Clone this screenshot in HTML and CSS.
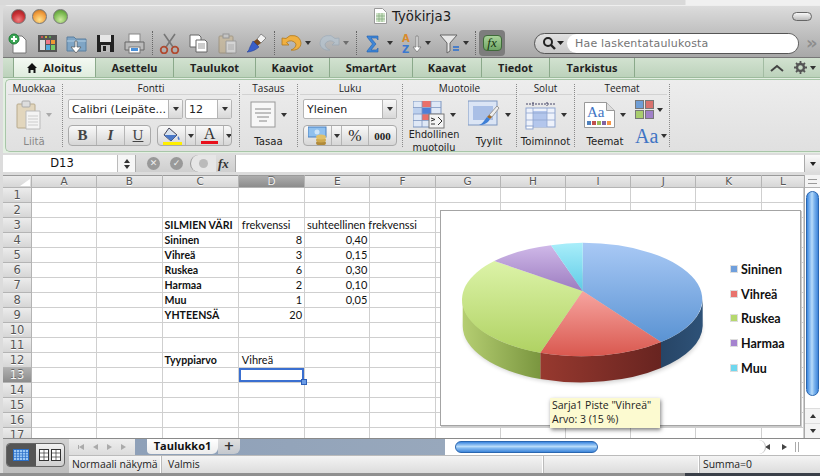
FILE: index.html
```html
<!DOCTYPE html>
<html lang="fi">
<head>
<meta charset="utf-8">
<title>Työkirja3</title>
<link rel="stylesheet" href="styles.css">
</head>
<body>
<div class="strip"></div>
<div class="window">
  <header class="titlebar">
    <div class="lights"><span class="light red"></span><span class="light orange"></span><span class="light green"></span></div>
    <div class="title">
      <svg width="13" height="16" viewBox="0 0 13 16"><path d="M.5.5h8l4 4v11H.5z" fill="#fff" stroke="#999"/><path d="M2 5h9v9H2z" fill="#cfe3c8"/><path d="M2 8h9M2 11h9M5 5v9M8 5v9" stroke="#7fa87a" stroke-width=".7"/></svg>
      <span>Työkirja3</span>
    </div>
    <span class="pill"></span>
  </header>

  <div class="toolbar">
    <div class="tb-group">
      <svg class="tb" viewBox="0 0 21 21"><path d="M5 3h9l4 4v13H5z" fill="#fff" stroke="#777"/><circle cx="6" cy="6" r="5" fill="#3aa655" stroke="#1f7a35"/><path d="M6 3v6M3 6h6" stroke="#fff" stroke-width="2"/></svg>
      <svg class="tb" viewBox="0 0 21 21"><rect x="1" y="2" width="19" height="17" fill="#555"/><circle cx="5" cy="4" r="1" fill="#e55"/><circle cx="9" cy="4" r="1" fill="#ec3"/><circle cx="13" cy="4" r="1" fill="#5b5"/><rect x="3" y="7" width="5" height="10" fill="#ddd"/><rect x="9" y="7" width="4" height="4" fill="#e78"/><rect x="14" y="7" width="4" height="4" fill="#e93"/><rect x="9" y="12" width="4" height="5" fill="#5ad"/><rect x="14" y="12" width="4" height="5" fill="#7c6"/></svg>
      <svg class="tb" viewBox="0 0 21 21"><path d="M1 4h7l2 2h10v12H1z" fill="#7fa5c5" stroke="#5a7f9f"/><path d="M1 8h19" stroke="#b5cfe3"/><path d="M11 8v6h4l-5 6-5-6h4V8z" fill="#fff" stroke="#555" stroke-width=".7"/></svg>
      <svg class="tb" viewBox="0 0 21 21"><path d="M2 2h17v17H2z" fill="#222"/><rect x="5" y="2" width="11" height="7" fill="#e6e6e6"/><rect x="6" y="12" width="9" height="7" fill="#bbb"/><rect x="8" y="13" width="3" height="5" fill="#222"/></svg>
      <svg class="tb" viewBox="0 0 21 21"><rect x="5" y="1" width="11" height="8" fill="#fff" stroke="#888"/><path d="M1 9h19v8H1z" fill="#bbb" stroke="#666"/><rect x="5" y="14" width="11" height="6" fill="#fff" stroke="#777"/><rect x="7" y="15" width="7" height="3" fill="#4a90d9"/></svg>
      <span class="sep"></span>
      <svg class="tb" viewBox="0 0 21 21"><path d="M5 1l9 13M16 1L7 14" stroke="#777" stroke-width="1.6"/><circle cx="5" cy="17" r="3.3" fill="none" stroke="#b04a30" stroke-width="1.8"/><circle cx="16" cy="17" r="3.3" fill="none" stroke="#b04a30" stroke-width="1.8"/></svg>
      <svg class="tb" viewBox="0 0 21 21"><path d="M2 2h9l2 2v10H2z" fill="#fff" stroke="#666"/><path d="M8 7h9l2 2v10H8z" fill="#fff" stroke="#666"/><path d="M10 11h7M10 13h7M10 15h7" stroke="#999"/></svg>
      <svg class="tb dim" viewBox="0 0 21 21"><rect x="2" y="3" width="14" height="17" rx="1" fill="#cfb98f" stroke="#8d7c5c"/><rect x="6" y="1" width="6" height="4" fill="#ccc" stroke="#777"/><path d="M9 8h10v12H9z" fill="#eee" stroke="#888"/><path d="M11 12h6M11 14h6M11 16h6" stroke="#aaa"/></svg>
      <svg class="tb" viewBox="0 0 21 21"><path d="M15 1l5 4-5 5-4-4z" fill="#f3f3f3" stroke="#888"/><path d="M11 6l4 4-4 3-4-4z" fill="#7a4a1f"/><path d="M7 8l6 6c-3 3-8 5-12 5 2-1 2-3 3-5z" fill="#3a5fc8" stroke="#23409a" stroke-width=".6"/></svg>
      <span class="sep"></span>
      <div class="tb-drop">
        <svg class="tb" viewBox="0 0 21 21"><path d="M1 4v7h7L5.500 8.500A6 6 0 0 1 15 10c0 3-2 5-5 6 5 1 10-2 10-7a8.500 8.500 0 0 0-15-4.500z" transform="translate(0 1)" fill="#f0b040" stroke="#b07a20" stroke-width=".8"/></svg><i class="caret"></i>
      </div>
      <div class="tb-drop dim">
        <svg class="tb" viewBox="0 0 21 21"><path d="M20 4v7h-7l2.500-2.500A6 6 0 0 0 6 10c0 3 2 5 5 6-5 1-10-2-10-7a8.500 8.500 0 0 1 15-4.500z" transform="translate(0 1)" fill="#b4c8d8" stroke="#8aa0b4" stroke-width=".8"/></svg><i class="caret"></i>
      </div>
      <span class="sep"></span>
      <div class="tb-drop">
        <svg class="tb" viewBox="0 0 21 21"><path d="M4 3h11v4l-1.500-2H8l5 6-5 6h5.500l1.500-2v4H4v-1l5.500-7L4 4z" fill="#3f86d6" stroke="#1f5fb0" stroke-width=".6"/></svg><i class="caret"></i>
      </div>
      <div class="tb-drop">
        <svg class="tb" viewBox="0 0 21 21"><text x="1" y="9" class="az a">A</text><text x="1" y="20" class="az z">Z</text><path d="M15 3v11h-3l4 5 4-5h-3V3z" fill="#fff" stroke="#777" stroke-width=".8"/></svg><i class="caret"></i>
      </div>
      <div class="tb-drop">
        <svg class="tb" viewBox="0 0 21 21"><path d="M1 2h17l-7 8v8l-3 2V10z" fill="#e8e8e8" stroke="#666"/><path d="M14 14h6M14 17h6" stroke="#2a6fd0" stroke-width="1.600"/></svg><i class="caret"></i>
      </div>
      <span class="sep sep-fx"></span>
    </div>
    <div class="fx-btn"><span>fx</span></div>
    <div class="search">
      <svg class="search-glass" width="26" height="14" viewBox="0 0 26 14"><circle cx="7" cy="6" r="4" fill="none" stroke="#222" stroke-width="2"/><path d="M10 9l4 4" stroke="#222" stroke-width="2.400"/><path d="M16 5h7l-3.500 4z" fill="#222"/></svg>
      <div class="search-field">Hae laskentataulukosta</div>
    </div>
    <span class="more">»</span>
  </div>

  <nav class="tabs">
    <span class="tab lead"></span>
    <span class="tab active">
      <svg width="10" height="10" viewBox="0 0 10 10"><path d="M5 0l5 5H8.500v5h-2V7h-3v3h-2V5H0z" fill="#111"/></svg>Aloitus</span>
    <span class="tab w-as">Asettelu</span>
    <span class="tab w-ta">Taulukot</span>
    <span class="tab w-ka">Kaaviot</span>
    <span class="tab w-sm">SmartArt</span>
    <span class="tab w-kv">Kaavat</span>
    <span class="tab w-ti">Tiedot</span>
    <span class="tab w-tr">Tarkistus</span>
    <span class="tabs-fill"></span>
    <span class="tabs-tools">
      <svg width="14" height="8" viewBox="0 0 14 8"><path d="M1 7l6-5 6 5" fill="none" stroke="#444" stroke-width="2"/></svg>
      <svg width="13" height="13" viewBox="0 0 13 13"><circle cx="6.500" cy="6.500" r="3.500" fill="none" stroke="#555" stroke-width="2.400"/><path d="M6.500 0v3M6.500 10v3M0 6.500h3M10 6.500h3M2 2l2 2M9 9l2 2M11 2L9 4M4 9l-2 2" stroke="#555" stroke-width="1.800"/></svg>
      <i class="caret"></i>
    </span>
  </nav>

  <section class="ribbon">
    <div class="panel">
      <div class="group g-muokkaa">
        <h3>Muokkaa</h3>
        <div class="big-row">
          <div class="big-col dimmed">
            <div class="big-ic">
              <svg width="25" height="30" viewBox="0 0 25 30"><rect x="1" y="4" width="18" height="24" rx="1" fill="#e2d6bd" stroke="#b8aa8d"/><rect x="6" y="1" width="8" height="6" rx="1" fill="#ddd" stroke="#aaa"/><path d="M10 11h14v18H10z" fill="#f4f4f4" stroke="#bbb"/><path d="M12 16h10M12 19h10M12 22h10M12 25h10" stroke="#ccc"/></svg>
              <i class="caret pale"></i>
            </div>
            <span class="big-label">Liitä</span>
          </div>
        </div>
      </div>

      <div class="group g-fontti">
        <h3>Fontti</h3>
        <div class="ctl-row">
          <div class="select s-font"><span>Calibri (Leipäte...</span><i class="drop"><b class="caret"></b></i></div>
          <div class="select s-size"><span>12</span><i class="drop"><b class="caret"></b></i></div>
        </div>
        <div class="ctl-row row2">
          <div class="seg s-biu"><b class="btn f-b">B</b><b class="btn f-i">I</b><b class="btn f-u">U</b></div>
          <div class="seg s-col">
            <span class="btn col-a">
              <svg width="20" height="20" viewBox="0 0 20 20"><path d="M7 2l8 7-6 6-7-6z" fill="#d8e2ee" stroke="#445"/><path d="M2 9l7 6 6-6z" fill="#4a78c8"/><path d="M16 10c2 2 2 4 1 4s-2-2-1-4z" fill="#4a78c8"/><rect x="1" y="16" width="19" height="4" fill="#ffef00"/></svg>
            </span><span class="btn col-c"><i class="caret"></i></span>
            <span class="btn col-a"><span class="col-letter">A</span></span><span class="btn col-c"><i class="caret"></i></span>
          </div>
        </div>
      </div>

      <div class="group g-tasaus">
        <h3>Tasaus</h3>
        <div class="big-row">
          <div class="big-col">
            <div class="big-ic">
              <svg width="26" height="27" viewBox="0 0 26 27"><rect x="1" y="1" width="24" height="25" fill="#f7f7f7" stroke="#999"/><path d="M5 8h16M5 12h16M7 16h12M9 20h8" stroke="#888"/></svg>
              <i class="caret"></i>
            </div>
            <span class="big-label">Tasaa</span>
          </div>
        </div>
      </div>

      <div class="group g-luku">
        <h3>Luku</h3>
        <div class="ctl-row">
          <div class="select s-num"><span>Yleinen</span><i class="drop"><b class="caret"></b></i></div>
        </div>
        <div class="ctl-row row2">
          <div class="seg s-luku">
            <span class="btn l-m">
              <svg width="20" height="20" viewBox="0 0 20 20"><rect x="0" y="1" width="18" height="10" fill="#8fc0ee" stroke="#4a80c0"/><circle cx="9" cy="6" r="2.500" fill="#cde4f8"/><ellipse cx="13" cy="17" rx="5" ry="2.500" fill="#b08a3a"/><ellipse cx="13" cy="14" rx="5" ry="2.500" fill="#cfa94f"/><ellipse cx="13" cy="11" rx="5" ry="2.500" fill="#e0c069"/></svg>
            </span><span class="btn l-c"><i class="caret"></i></span><span class="btn l-p">%</span><span class="btn l-z">000</span>
          </div>
        </div>
      </div>

      <div class="group g-muotoile">
        <h3>Muotoile</h3>
        <div class="big-row">
          <div class="big-col c-ehd">
            <div class="big-ic">
              <svg width="32" height="28" viewBox="0 0 32 28"><rect x="0" y="0" width="28" height="26" fill="#dfe8f6" stroke="#7d96c0"/><rect x="9" y="0" width="9" height="6" fill="#e9706a"/><rect x="9" y="7" width="9" height="6" fill="#4f7fd6"/><rect x="0" y="7" width="9" height="6" fill="#bcd0ee"/><rect x="9" y="13" width="9" height="6" fill="#e9706a"/><path d="M0 6.500h28M0 13h28M0 19.500h28M9 0v26M18 0v26" stroke="#7d96c0" stroke-width=".8"/><rect x="16" y="13" width="15" height="14" fill="#f4f4f4" stroke="#777"/><path d="M18 17l4 1.500-4 1.500M18 23h4M25 16l4 4-4 4" fill="none" stroke="#333"/></svg>
              <i class="caret"></i>
            </div>
            <span class="big-label two">Ehdollinen<br>muotoilu</span>
          </div>
          <div class="big-col c-tyy">
            <div class="big-ic">
              <svg width="32" height="30" viewBox="0 0 32 30"><rect x="0" y="1" width="29" height="24" fill="#dbe5f5" stroke="#7d96c0"/><rect x="5" y="6" width="20" height="14" fill="#a9bfe6"/><path d="M29 6L31 8 24 17 21 15z" fill="#eee" stroke="#999"/><path d="M21 15l3 2-2 2-3-2z" fill="#a36a26"/><path d="M19 17l3 2c-2 4-6 6-11 6 3-1 5-4 8-8z" fill="#3f7fd6"/></svg>
              <i class="caret"></i>
            </div>
            <span class="big-label">Tyylit</span>
          </div>
        </div>
      </div>

      <div class="group g-solut">
        <h3>Solut</h3>
        <div class="big-row">
          <div class="big-col">
            <div class="big-ic">
              <svg width="31" height="30" viewBox="0 0 31 30"><path d="M1 4h29M8 2v4M22 2v4" stroke="#446" stroke-dasharray="2 1"/><rect x="1" y="8" width="29" height="19" fill="#eef2fb" stroke="#8fa5cf"/><rect x="8" y="11" width="14" height="16" fill="#b3c6ec"/><path d="M1 13h29M1 20h29M8 8v19M22 8v19" stroke="#8fa5cf" stroke-width=".8"/><rect x="1" y="26" width="7" height="3" fill="#fff" stroke="#8fa5cf"/></svg>
              <i class="caret"></i>
            </div>
            <span class="big-label">Toiminnot</span>
          </div>
        </div>
      </div>

      <div class="group g-teemat">
        <h3>Teemat</h3>
        <div class="big-row">
          <div class="big-col c-tee">
            <div class="big-ic">
              <svg class="theme-ic" width="31" height="26" viewBox="0 0 31 26"><path d="M.5.5h22l8 8v17H.5z" fill="#fff" stroke="#999"/><path d="M22.500.5v8h8" fill="#ddd" stroke="#999"/><text x="3" y="15" class="aa-sm">Aa</text><rect x="3" y="19" width="4" height="4" fill="#4f81bd"/><rect x="8" y="19" width="4" height="4" fill="#c0504d"/><rect x="13" y="19" width="4" height="4" fill="#9bbb59"/><rect x="18" y="19" width="4" height="4" fill="#8064a2"/><rect x="23" y="19" width="4" height="4" fill="#f79646"/></svg>
              <i class="caret"></i>
            </div>
            <span class="big-label">Teemat</span>
          </div>
          <div class="swatch-col">
            <div class="swatch-row">
              <div class="swatches"><span class="sw s1"></span><span class="sw s2"></span><span class="sw s3"></span><span class="sw s4"></span></div>
              <i class="caret"></i>
            </div>
            <div class="swatch-row aa-row"><span class="aa">Aa</span><i class="caret"></i></div>
          </div>
        </div>
      </div>
    </div>
  </section>

  <div class="formula">
    <div class="namebox">D13</div>
    <div class="spinner"><i class="up"></i><i class="down"></i></div>
    <div class="f-btns">
      <span class="round">✕</span>
      <span class="round">✓</span>
      <span class="minus"><i></i></span>
      <span class="f-x">fx</span>
    </div>
    <div class="f-input"></div>
    <div class="f-drop"><i class="caret"></i></div>
  </div>

  <div class="sheet-wrap">
    <div class="sheet">
      <table class="grid">
        <thead><tr><th class="corner"><i></i></th><th>A</th><th>B</th><th class="c-wide">C</th><th class="sel">D</th><th>E</th><th>F</th><th>G</th><th>H</th><th>I</th><th>J</th><th>K</th><th class="c-last">L</th></tr></thead>
        <tbody>
          <tr><th>1</th><td></td><td></td><td></td><td></td><td></td><td></td><td></td><td></td><td></td><td></td><td></td><td></td></tr>
          <tr><th>2</th><td></td><td></td><td></td><td></td><td></td><td></td><td></td><td></td><td></td><td></td><td></td><td></td></tr>
          <tr><th>3</th><td></td><td></td><td class="b">SILMIEN VÄRI</td><td>frekvenssi</td><td class="over">suhteellinen frekvenssi</td><td></td><td></td><td></td><td></td><td></td><td></td><td></td></tr>
          <tr><th>4</th><td></td><td></td><td class="b">Sininen</td><td class="n">8</td><td class="n">0,40</td><td></td><td></td><td></td><td></td><td></td><td></td><td></td></tr>
          <tr><th>5</th><td></td><td></td><td class="b">Vihreä</td><td class="n">3</td><td class="n">0,15</td><td></td><td></td><td></td><td></td><td></td><td></td><td></td></tr>
          <tr><th>6</th><td></td><td></td><td class="b">Ruskea</td><td class="n">6</td><td class="n">0,30</td><td></td><td></td><td></td><td></td><td></td><td></td><td></td></tr>
          <tr><th>7</th><td></td><td></td><td class="b">Harmaa</td><td class="n">2</td><td class="n">0,10</td><td></td><td></td><td></td><td></td><td></td><td></td><td></td></tr>
          <tr><th>8</th><td></td><td></td><td class="b">Muu</td><td class="n">1</td><td class="n">0,05</td><td></td><td></td><td></td><td></td><td></td><td></td><td></td></tr>
          <tr><th>9</th><td></td><td></td><td class="b">YHTEENSÄ</td><td class="n">20</td><td></td><td></td><td></td><td></td><td></td><td></td><td></td><td></td></tr>
          <tr><th>10</th><td></td><td></td><td></td><td></td><td></td><td></td><td></td><td></td><td></td><td></td><td></td><td></td></tr>
          <tr><th>11</th><td></td><td></td><td></td><td></td><td></td><td></td><td></td><td></td><td></td><td></td><td></td><td></td></tr>
          <tr><th>12</th><td></td><td></td><td class="b">Tyyppiarvo</td><td>Vihreä</td><td></td><td></td><td></td><td></td><td></td><td></td><td></td><td></td></tr>
          <tr><th class="sel">13</th><td></td><td></td><td></td><td class="active-cell"><i class="handle"></i></td><td></td><td></td><td></td><td></td><td></td><td></td><td></td><td></td></tr>
          <tr><th>14</th><td></td><td></td><td></td><td></td><td></td><td></td><td></td><td></td><td></td><td></td><td></td><td></td></tr>
          <tr><th>15</th><td></td><td></td><td></td><td></td><td></td><td></td><td></td><td></td><td></td><td></td><td></td><td></td></tr>
          <tr><th>16</th><td></td><td></td><td></td><td></td><td></td><td></td><td></td><td></td><td></td><td></td><td></td><td></td></tr>
          <tr><th>17</th><td></td><td></td><td></td><td></td><td></td><td></td><td></td><td></td><td></td><td></td><td></td><td></td></tr>
        </tbody>
      </table>

      <div class="chart">
        <svg class="pie" width="270" height="170" viewBox="455 235 270 170">
          <defs>
            <linearGradient id="gb" x1="0" y1="0" x2="0" y2="1"><stop offset="0" stop-color="#a9c9f5"/><stop offset="1" stop-color="#5a93d3"/></linearGradient>
            <linearGradient id="gr" x1="0" y1="0" x2="0" y2="1"><stop offset="0" stop-color="#f7a5a0"/><stop offset="1" stop-color="#d9584f"/></linearGradient>
            <linearGradient id="gg" x1="0" y1="0" x2="0" y2="1"><stop offset="0" stop-color="#dcf3a8"/><stop offset="1" stop-color="#b0d263"/></linearGradient>
            <linearGradient id="gp" x1="0" y1="0" x2="0" y2="1"><stop offset="0" stop-color="#cfb8e8"/><stop offset="1" stop-color="#9c7cc0"/></linearGradient>
            <linearGradient id="gc" x1="0" y1="0" x2="0" y2="1"><stop offset="0" stop-color="#a9eefa"/><stop offset="1" stop-color="#5fcbe6"/></linearGradient>
            <linearGradient id="sr" x1="0" y1="0" x2="1" y2="0"><stop offset="0" stop-color="#97392f"/><stop offset="1" stop-color="#682420"/></linearGradient>
            <linearGradient id="sg" x1="0" y1="0" x2="1" y2="0"><stop offset="0" stop-color="#b5ce72"/><stop offset="1" stop-color="#7a963f"/></linearGradient>
            <linearGradient id="sb" x1="0" y1="0" x2="1" y2="0"><stop offset="0" stop-color="#274566"/><stop offset="1" stop-color="#2e5278"/></linearGradient>
          </defs>
          <ellipse cx="582" cy="327" rx="119" ry="56" fill="#000" opacity=".18" class="pie-shadow"/>
          <path d="M701.700 298A120 56.600 0 0 1 660 341V367A120 56.600 0 0 0 701.700 325Z" fill="url(#sb)"/>
          <path d="M660 341A120 56.600 0 0 1 539.300 351.700V378A120 56.600 0 0 0 660 367Z" fill="url(#sr)"/>
          <path d="M539.300 351.700A120 56.600 0 0 1 461.700 298V325A120 56.600 0 0 0 539.300 378Z" fill="url(#sg)"/>
          <path d="M581.700 290V241.700A120 56.600 0 0 1 660 341Z" fill="url(#gb)"/>
          <path d="M581.700 290L660 341A120 56.600 0 0 1 539.300 351.700Z" fill="url(#gr)"/>
          <path d="M581.700 290L539.300 351.700A120 56.600 0 0 1 493.300 260Z" fill="url(#gg)"/>
          <path d="M581.700 290L493.300 260A120 56.600 0 0 1 550 244.300Z" fill="url(#gp)"/>
          <path d="M581.700 290L550 244.300A120 56.600 0 0 1 581.700 241.700Z" fill="url(#gc)"/>
        </svg>
        <ul class="legend">
          <li><i class="k k1"></i>Sininen</li>
          <li><i class="k k2"></i>Vihreä</li>
          <li><i class="k k3"></i>Ruskea</li>
          <li><i class="k k4"></i>Harmaa</li>
          <li><i class="k k5"></i>Muu</li>
        </ul>
      </div>
      <div class="tooltip">Sarja1 Piste "Vihreä"<br>Arvo: 3 (15 %)</div>
    </div>
    <aside class="vscroll">
      <div class="v-grip"></div>
      <div class="v-track"><div class="v-thumb"></div></div>
      <div class="v-arrow"><i class="up"></i></div>
      <div class="v-arrow"><i class="down"></i></div>
    </aside>
  </div>

  <footer class="footer">
    <div class="views">
      <div class="view-switch">
        <span class="view on"><svg width="16" height="12" viewBox="0 0 16 12"><rect x=".5" y=".5" width="15" height="11" fill="#9cc8f5" stroke="#2a6fc8"/><path d="M0 3.500h16M0 6h16M0 8.500h16M3.500 0v12M6.500 0v12M9.500 0v12M12.500 0v12" stroke="#2a6fc8" stroke-width=".7"/></svg></span>
        <span class="view"><svg width="22" height="12" viewBox="0 0 22 12"><rect x=".5" y=".5" width="9" height="11" fill="#fff" stroke="#333"/><rect x="12.500" y=".5" width="9" height="11" fill="#fff" stroke="#333"/><path d="M0 4h10M0 8h10M5 0v12M12 4h10M12 8h10M17 0v12" stroke="#333" stroke-width=".7"/></svg></span>
      </div>
    </div>
    <div class="foot-main">
      <div class="sheetbar">
        <div class="tab-nav">
          <i class="n-first"></i><i class="n-prev"></i><i class="n-next"></i><i class="n-last"></i>
        </div>
        <div class="sheet-tabs">
          <span class="s-tab">Taulukko1</span><span class="s-add">+</span>
        </div>
        <div class="hscroll">
          <div class="h-thumb"></div>
          <div class="h-end"><i class="n-prev"></i><i class="n-next"></i><i class="h-grip"></i></div>
        </div>
      </div>
      <div class="status">
        <span class="st st-view">Normaali näkymä</span>
        <span class="st st-ready">Valmis</span>
        <span class="st st-blank"></span>
        <span class="st st-sum">Summa=0</span>
      </div>
    </div>
  </footer>
</div>
<div class="desk"><span class="desk-dark"></span></div>
</body>
</html>
```

FILE: styles.css
```css
* { box-sizing: border-box; }
html, body { margin: 0; padding: 0; }
body {
  width: 820px;
  height: 476px;
  overflow: hidden;
  background: #dcdcdc;
  font-family: "DejaVu Sans", sans-serif;
  font-size: 11px;
  color: #222;
  position: relative;
}
.strip { height: 5px; background: linear-gradient(90deg, #d9d9d9 0, #d9d9d9 685px, #f0f0f0 686px); }
.window { margin-left: 3px; width: 817px; height: 468px; display: flex; flex-direction: column; overflow: hidden; border-radius: 5px 0 0 0; }
.desk { height: 3px; display: flex; justify-content: flex-end; background: #8f8f8f; }
.desk-dark { width: 135px; background: #3a3f48; }

/* title bar */
.titlebar { height: 24px; flex: none; background: linear-gradient(#dcdcdc, #c4c4c4); border-top: 1px solid #eee; padding-bottom: 3px; position: relative; display: flex; justify-content: center; align-items: center; }
.lights { position: absolute; left: 8px; top: 3px; display: flex; gap: 6px; }
.light { width: 15px; height: 15px; border-radius: 50%; border: 1px solid #777; }
.red { background: radial-gradient(circle at 50% 75%, #f08080 0, #c92f34 55%, #8d1f24 100%); }
.orange { background: radial-gradient(circle at 50% 75%, #ffe28a 0, #f09a3b 60%, #b36a1f 100%); }
.green { background: radial-gradient(circle at 50% 75%, #cdeb9e 0, #79b84f 60%, #4f8a30 100%); }
.title { display: flex; align-items: center; gap: 5px; font-size: 13.300px; color: #1c1c1c; margin-left: 2px; }
.pill { position: absolute; right: 8px; top: 6px; width: 20px; height: 9px; border-radius: 5px; border: 1px solid #666; background: linear-gradient(#f8f8f8, #bbb); }

/* toolbar */
.toolbar { height: 29px; flex: none; background: linear-gradient(#c4c4c4, #a8a8a8); display: flex; align-items: center; padding-left: 5px; border-bottom: 1px solid #777; }
.tb-group { display: flex; align-items: center; gap: 8px; }
.tb { width: 21px; height: 21px; display: block; flex: none; }
.dim { opacity: .55; }
.sep { width: 1px; height: 24px; border-left: 1px dotted #666; margin: 0 -2px 0 -1px; }
.tb-drop { display: flex; align-items: center; gap: 3px; width: 31px; margin-right: -1px; }
.caret { display: inline-block; width: 0; height: 0; border-left: 3.500px solid transparent; border-right: 3.500px solid transparent; border-top: 4px solid #333; flex: none; }
.caret.pale { border-top-color: #aaa; }
.az { font: bold 10px "DejaVu Sans", sans-serif; }
.az.a { fill: #d98a2b; }
.az.z { fill: #3a78d0; }
.sep-fx { margin-left: -2px; margin-right: 0; }
.fx-btn { width: 26px; height: 26px; margin-left: 3px; border-radius: 4px; background: #7d7d7d; display: flex; align-items: center; justify-content: center; flex: none; }
.fx-btn span { width: 19px; height: 16px; border-radius: 4px; background: linear-gradient(#a9d29a, #6fa566); border: 1px solid #3f6a3a; font: italic 13px/13px "Liberation Serif", serif; text-align: center; color: #14320f; }
.search { width: 265px; height: 21px; margin-left: 29px; border-radius: 11px; border: 1px solid #555; background: linear-gradient(#e2e2e2, #c8c8c8); display: flex; align-items: center; padding: 0 0 0 6px; flex: none; }
.search-glass { flex: none; }
.search-field { flex: 1; height: 19px; border-radius: 10px; background: #fff; color: #747474; font-size: 11px; line-height: 19px; padding-left: 8px; letter-spacing: .2px; }
.more { margin-left: 7px; font-size: 18px; line-height: 18px; color: #8d8d8d; font-weight: bold; }

/* tabs */
.tabs { height: 20px; flex: none; display: flex; background: linear-gradient(#d2e2d0, #bcd2bb); font-family: "Open Sans", sans-serif; font-weight: 700; font-size: 11px; color: #222; border-bottom: 1px solid #9dbb9d; }
.tab { display: flex; align-items: center; justify-content: center; gap: 6px; border-right: 1px solid #8aa98a; flex: none; }
.lead { width: 11px; border-left: 0; }
.active { width: 82px; background: linear-gradient(#f4f9f3, #dfecdd); }
.w-as { width: 78px; } .w-ta { width: 82px; } .w-ka { width: 74px; } .w-sm { width: 83px; } .w-kv { width: 69px; } .w-ti { width: 68px; } .w-tr { width: 85px; }
.tabs-fill { flex: 1; }
.tabs-tools { width: 57px; border-left: 1px solid #a2bca2; display: flex; align-items: center; gap: 10px; padding-left: 6px; }
.tabs-tools .caret { margin-left: -7px; }

/* ribbon */
.ribbon { height: 75px; flex: none; background: #e3efe2; padding: 1px 0 1px 2px; }
.panel { height: 73px; width: 815px; border: 1px solid #a8c6a8; border-right: 0; border-radius: 5px 0 0 5px; background: linear-gradient(#ededed, #e0e0e0); display: flex; padding-top: 4px; }
.group { position: relative; height: 63px; border-right: 1px dotted #8a8a8a; padding: 0 2px; flex: none; display: flex; flex-direction: column; }
.group h3 { margin: 0; height: 11px; border-bottom: 1px solid #d2d2d2; font-family: "Open Sans", sans-serif; font-size: 10px; line-height: 9px; font-weight: 400; text-align: center; color: #222; flex: none; }
.g-muokkaa { width: 57px; } .g-fontti { width: 177px; } .g-tasaus { width: 58px; } .g-luku { width: 105px; } .g-muotoile { width: 114px; padding: 0; } .g-solut { width: 58px; } .g-teemat { width: 95px; }
.ctl-row { display: flex; gap: 2px; margin-top: 4px; padding-left: 3px; }
.row2 { margin-top: 6px; gap: 6px; }
.select { height: 20px; background: #fff; border: 1px solid #b5b5b5; border-radius: 2px; display: flex; align-items: center; font-size: 11px; padding-left: 3px; overflow: hidden; }
.select span { flex: 1; white-space: nowrap; overflow: hidden; }
.drop { width: 14px; height: 18px; border-left: 1px solid #b5b5b5; background: linear-gradient(#f8f8f8, #d8d8d8); display: flex; align-items: center; justify-content: center; flex: none; }
.s-font { width: 115px; } .s-size { width: 47px; }
.s-num { width: 94px; }
.seg { height: 21px; border: 1px solid #aaa; border-radius: 4px; background: linear-gradient(#f9f9f9, #d6d6d6); display: flex; overflow: hidden; }
.btn { height: 19px; display: flex; align-items: center; justify-content: center; border-right: 1px solid #b5b5b5; flex: none; }
.btn:last-child { border-right: 0; }
.s-biu { width: 83px; }
.s-biu .btn { width: 28px; font: 700 15px/19px "Liberation Serif", serif; color: #444; }
.s-biu .f-i { font-style: italic; }
.s-biu .f-u { text-decoration: underline; font-weight: 400; width: 26px; }
.s-col { width: 75px; }
.col-a { width: 28px; }
.col-c { width: 10px; }
.col-c .caret { border-left-width: 3px; border-right-width: 3px; }
.col-letter { font: 16px/14px "Liberation Serif", serif; color: #333; border-bottom: 3px solid #e8101c; padding: 0 3px; }
.s-luku { width: 94px; }
.l-m { width: 28px; } .l-c { width: 10px; } .l-p { width: 27px; font: 16px "Liberation Serif", serif; } .l-z { width: 27px; font: 700 11px "Liberation Serif", serif; }
.big-row { display: flex; flex: 1; }
.big-col { display: flex; flex-direction: column; align-items: center; flex: none; position: relative; width: 100%; }
.big-ic { height: 38px; display: flex; align-items: center; gap: 5px; padding-top: 1px; }
.big-label { font-size: 10.200px; line-height: 13px; text-align: center; margin-top: 2px; white-space: nowrap; }
.big-label.two { font-size: 9.700px; margin-top: -4px; line-height: 12.500px; }
.dimmed .big-label { color: #888; }
.c-ehd { width: 62px; } .c-tyy { width: 46px; margin-left: 1px; }
.c-tee { width: 56px; }
.swatch-col { display: flex; flex-direction: column; padding: 5px 0 0 2px; gap: 8px; }
.swatch-row { display: flex; align-items: center; gap: 3px; }
.swatches { display: grid; grid-template-columns: 9px 9px; gap: 1px; }
.sw { height: 9px; border: 1px solid #777; }
.s1 { background: #6f9ed6; } .s2 { background: #d9726e; } .s3 { background: #a8cd6e; } .s4 { background: #a080c8; }
.aa { font: 20px/18px "Liberation Serif", serif; color: #3f74c4; }
.aa-sm { font: 15px "Liberation Serif", serif; fill: #3f74c4; }

/* formula */
.formula { height: 17px; flex: none; margin-top: 2px; display: flex; background: #fff; }
.namebox { width: 115px; text-align: center; font-size: 11.500px; line-height: 17px; color: #111; padding-left: 4px; border-right: 1px solid #bbb; }
.spinner { width: 17px; display: flex; flex-direction: column; align-items: center; justify-content: center; gap: 2px; background: #f6f6f6; }
.up { display: block; width: 0; height: 0; border-left: 3px solid transparent; border-right: 3px solid transparent; border-bottom: 4px solid #333; }
.down { display: block; width: 0; height: 0; border-left: 3px solid transparent; border-right: 3px solid transparent; border-top: 4px solid #333; }
.f-btns { width: 101px; background: linear-gradient(#dedede, #cfcfcf); display: flex; align-items: center; padding-left: 11px; gap: 10px; border-right: 1px solid #aaa; border-left: 1px solid #aaa; }
.round { width: 13px; height: 13px; border-radius: 50%; background: #999; color: #eee; font-size: 9px; line-height: 13px; text-align: center; font-weight: 700; }
.minus { width: 26px; height: 17px; margin-left: -3px; border-radius: 9px 0 0 9px; border-left: 1px solid #999; display: flex; align-items: center; justify-content: center; background: #e6e6e6; }
.minus i { width: 9px; height: 9px; border-radius: 50%; background: #bbb; }
.f-x { font: italic 700 13px/17px "Liberation Serif", serif; color: #333; margin-left: -8px; }
.f-input { flex: 1; }
.f-drop { width: 16px; background: linear-gradient(#fafafa, #ddd); border-left: 1px solid #aaa; display: flex; align-items: center; justify-content: center; }
.f-drop .caret { border-top-color: #222; }

/* sheet */
.sheet-wrap { height: 263px; flex: none; margin-top: 3px; display: flex; position: relative; }
.sheet { position: relative; width: 801px; overflow: hidden; background: #fff; }
.grid { border-collapse: separate; border-spacing: 0; table-layout: fixed; width: 801px; font-family: "Lato", sans-serif; font-size: 11px; }
.grid th { font-family: "DejaVu Sans", sans-serif; font-size: 11.500px; font-weight: 400; color: #555; text-shadow: 0 1px 0 #fff; background: linear-gradient(#ececec, #d6d6d6); border-right: 1px solid #b4b4b4; border-bottom: 1px solid #b4b4b4; padding: 0; width: 65px; height: 15px; line-height: 14px; text-align: center; }
.grid thead th { height: 13px; line-height: 12px; font-size: 10.500px; box-shadow: inset 0 1px 0 #9a9a9a; }
.grid .corner { width: 29px; position: relative; }
.corner i { position: absolute; right: 1px; bottom: 1px; width: 0; height: 0; border-left: 10px solid transparent; border-bottom: 7px solid #fff; }
.grid .c-wide { width: 76px; }
.grid th.c-last { width: 42px; border-right: 0; }
.grid thead th:nth-child(5) { width: 66px; }
.grid th.sel { background: linear-gradient(#b0b0b0, #8c8c8c); color: #f5f5f5; text-shadow: 0 -1px 0 #666; }
.grid td { height: 15px; padding: 0 2px; border-right: 1px solid #cfcfcf; border-bottom: 1px solid #cfcfcf; line-height: 14px; white-space: nowrap; color: #111; position: relative; }
.grid td:nth-child(5) { padding-left: 3px; }
.b { font-weight: 700; font-size: 10.600px; }
.n { text-align: right; }
.over { overflow: visible; }
.grid td.active-cell { box-shadow: inset 0 0 0 2px #3a6fd0; }
.handle { position: absolute; right: -3px; bottom: -3px; width: 6px; height: 6px; background: #6b9ce6; border: 1px solid #2c5fb8; z-index: 2; }

.chart { position: absolute; left: 437px; top: 35px; width: 361px; height: 216px; background: #fff; border: 1px solid #a4a4a4; box-shadow: 1px 1px 0 #ccc; }
.pie { position: absolute; left: 15px; top: 25px; }
.pie-shadow { filter: blur(2px); }
.legend { position: absolute; left: 289px; top: 46px; list-style: none; margin: 0; padding: 0; font-family: "Lato", sans-serif; font-weight: 700; font-size: 12.500px; color: #111; }
.legend li { height: 24.800px; display: flex; align-items: center; gap: 3px; }
.k { width: 8px; height: 8px; border: 1px solid #ddd; margin-top: -1px; }
.k1 { background: #6f9fdc; } .k2 { background: #e8726c; } .k3 { background: #b5d86e; } .k4 { background: #a583cf; } .k5 { background: #6fd7ee; }
.tooltip { position: absolute; left: 547px; top: 223px; width: 110px; height: 30px; background: #fcfad0; box-shadow: 1px 2px 4px rgba(0, 0, 0, .5); font-family: "Open Sans", sans-serif; font-size: 10.500px; line-height: 13.500px; padding: 1px 2px; color: #222; z-index: 3; white-space: nowrap; }

.vscroll { width: 16px; background: #f4f4f4; border-left: 1px solid #aaa; display: flex; flex-direction: column; align-items: center; }
.v-grip { height: 13px; width: 100%; border-bottom: 1px solid #b4b4b4; background: linear-gradient(#9a9a9a, #9a9a9a) center 4px / 9px 1px no-repeat, linear-gradient(#9a9a9a, #9a9a9a) center 8px / 9px 1px no-repeat; }
.v-track { flex: 1; width: 100%; padding: 3px 1px 0; background: #fff; }
.v-thumb { height: 205px; width: 13px; border-radius: 7px; border: 1px solid #2966b0; background: linear-gradient(90deg, #3a86e0, #b8dcfa 45%, #7fb6ee 65%, #3f86da); }
.v-arrow { height: 15px; width: 100%; display: flex; align-items: center; justify-content: center; border-top: 1px solid #ddd; }

/* footer */
.footer { height: 35px; flex: none; display: flex; }
.views { width: 66px; background: linear-gradient(#d2d2d2, #bdbdbd); border-top: 1px solid #8a8a8a; padding: 4px 0 0 3px; flex: none; }
.view-switch { width: 59px; height: 24px; border-radius: 4px; border: 1px solid #666; display: flex; overflow: hidden; background: linear-gradient(#f1f1f1, #cfcfcf); }
.view { flex: 1; display: flex; align-items: center; justify-content: center; }
.view.on { background: #555; }
.foot-main { flex: 1; display: flex; flex-direction: column; }
.sheetbar { height: 17px; display: flex; flex: none; border-top: 1px solid #8a8a8a; background: #fff; }
.tab-nav { width: 66px; background: linear-gradient(#eee, #dcdcdc); display: flex; align-items: center; justify-content: space-around; padding: 0 5px; flex: none; }
.n-first, .n-prev { display: block; width: 0; height: 0; border-top: 3px solid transparent; border-bottom: 3px solid transparent; border-right: 5px solid #aaa; }
.n-next, .n-last { display: block; width: 0; height: 0; border-top: 3px solid transparent; border-bottom: 3px solid transparent; border-left: 5px solid #aaa; }
.n-first { border-right-color: #aaa; box-shadow: -2px 0 0 -1px #aaa; }
.sheet-tabs { width: 310px; flex: none; background: linear-gradient(90deg, #8ea0b8, #98a8bc); padding-left: 12px; display: flex; }
.s-tab { width: 71px; height: 15px; background: linear-gradient(#fff, #ececec); border-radius: 0 0 6px 4px; font-family: "Open Sans", sans-serif; font-weight: 700; font-size: 11px; line-height: 14px; text-align: center; color: #111; }
.s-add { width: 22px; height: 15px; background: linear-gradient(#e0e0e0, #c4c8ce); border-radius: 0 0 6px 0; font-weight: 700; font-size: 13px; line-height: 13px; text-align: center; color: #333; }
.hscroll { flex: 1; position: relative; padding: 2px 0 0 10px; display: flex; background: #fff; }
.h-thumb { width: 143px; height: 12px; border-radius: 6px; border: 1px solid #2966b0; background: linear-gradient(#3a86e0, #b8dcfa 45%, #7fb6ee 65%, #3f86da); }
.h-end { position: absolute; right: 0; top: 0; width: 55px; height: 16px; display: flex; align-items: center; gap: 12px; }
.h-end::before { content: ""; position: absolute; left: -7px; top: 1px; width: 7px; height: 14px; border-right: 1px solid #bbb; border-radius: 0 7px 7px 0; }
.h-end .n-prev { border-right-color: #444; }
.h-end .n-next { border-left-color: #444; }
.h-grip { width: 4px; height: 10px; margin-left: -4px; border-left: 1px solid #aaa; border-right: 1px solid #aaa; }
.status { flex: 1; display: flex; background: linear-gradient(#f4f4f4, #dcdcdc); border-top: 1px solid #bbb; font-family: "Open Sans", sans-serif; font-size: 10.400px; line-height: 17px; color: #222; white-space: nowrap; }
.st { border-right: 1px solid #fff; padding-left: 3px; flex: none; box-shadow: 1px 0 0 #bbb; margin-right: 1px; }
.st-view { width: 92px; }
.st-ready { width: 381px; padding-left: 6px; }
.st-blank { width: 155px; }
.st-sum { flex: 1; border: 0; box-shadow: none; }
```
